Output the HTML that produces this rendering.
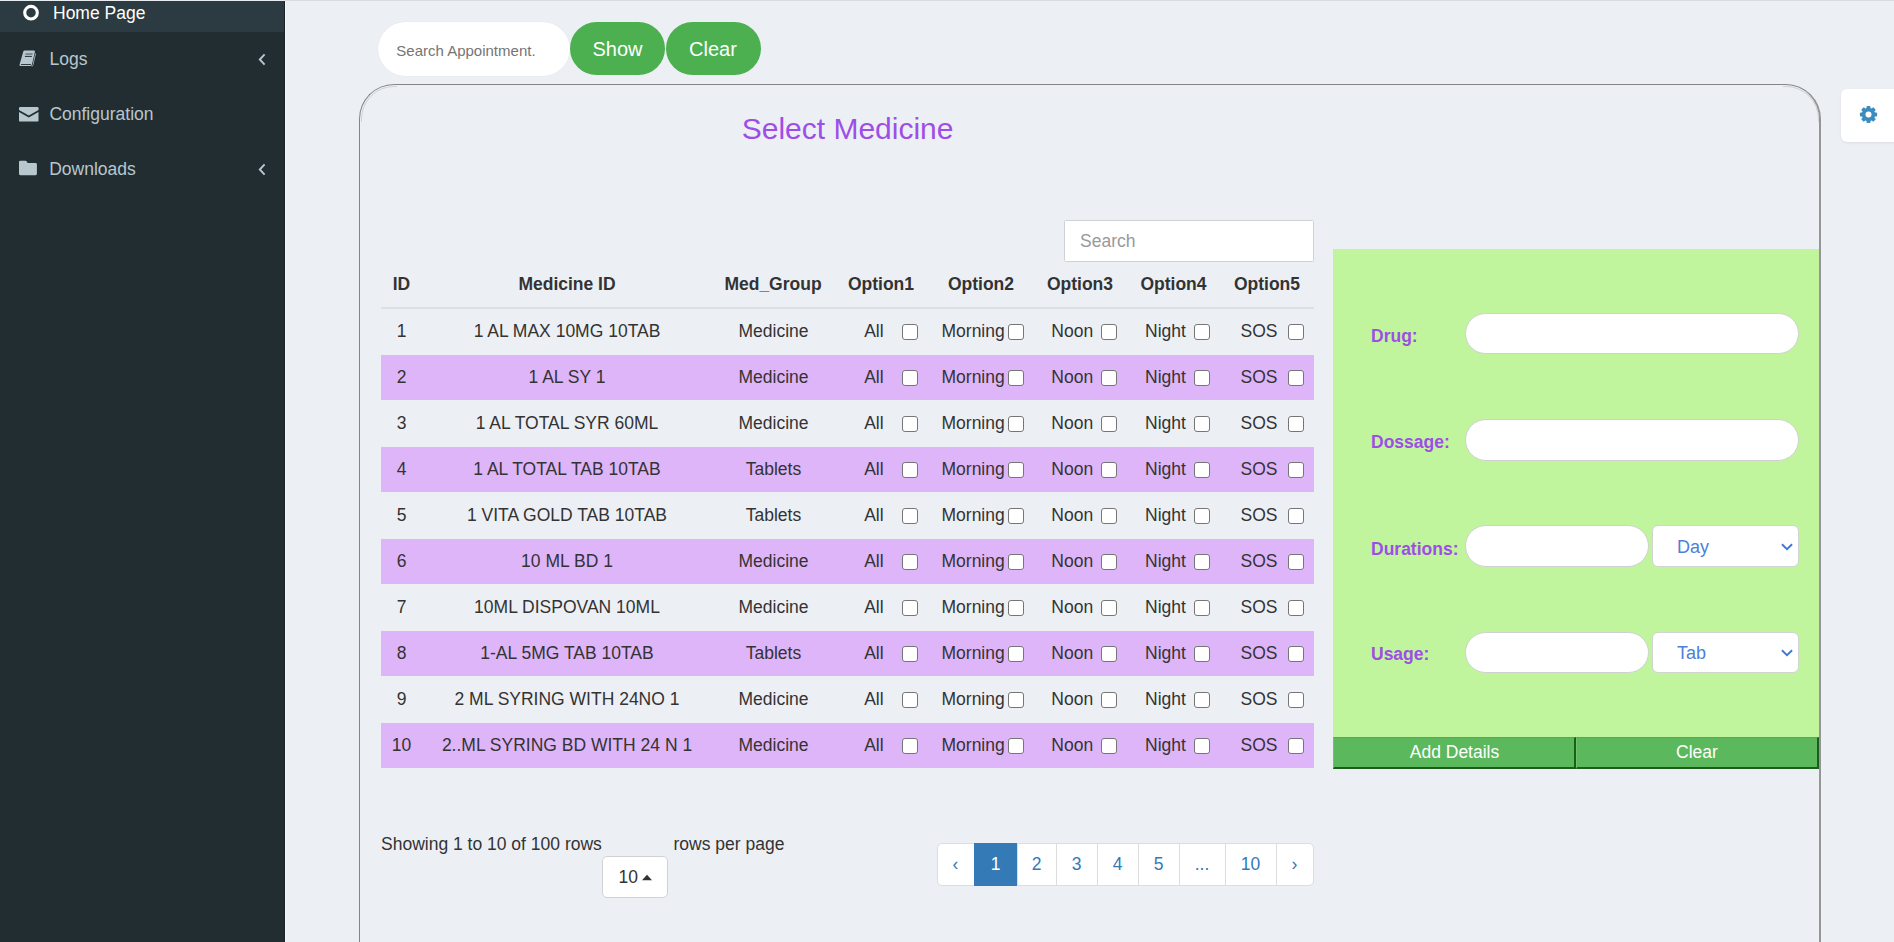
<!DOCTYPE html><html><head><meta charset="utf-8"><title>Select Medicine</title><style>*{margin:0;padding:0;box-sizing:border-box}
html,body{width:1894px;height:942px;overflow:hidden;background:#ecf0f5;font-family:"Liberation Sans",sans-serif;color:#333;position:relative}
.t{position:absolute;white-space:nowrap}
.a{position:absolute;display:block}
.box{position:absolute}
.sidebar{position:absolute;left:0;top:0;width:285px;height:942px;background:#222d32}
.active{position:absolute;left:0;top:1px;width:284px;height:31px;background:#2c3b41}
.sbedge{position:absolute;left:284px;top:0;width:1px;height:942px;background:#1a2226}
.sbedge2{position:absolute;left:285px;top:0;width:1px;height:942px;background:#f7f9fb}
.topline1{position:absolute;left:0;top:0;width:285px;height:1px;background:#e6ecef}
.topline2{position:absolute;left:285px;top:0;width:1609px;height:1px;background:#d8dbe0}
.sappt{background:#fff;border-radius:27px;box-shadow:0 0 1px rgba(0,0,0,.12)}
.gbtn{background:#4caf50;border-radius:27px}
.gearbox{left:1841px;top:89px;width:80px;height:53px;background:#fff;border-radius:6px;box-shadow:0 1px 3px rgba(0,0,0,.08)}
.cont{position:absolute;left:359px;top:84px;width:1462px;height:1000px;border:1.25px solid #858585;border-right:2px solid #959595;border-radius:35px}
.corner{position:absolute;width:36px;height:36px;overflow:hidden}
.corner div{position:absolute;width:200px;height:200px;border:1px solid #cfd1d5;border-radius:33px}
.tsearch{left:1064px;top:220px;width:250px;height:42px;background:#fff;border:1.25px solid #cfd2d6;border-radius:1.5px}
.prow{left:381px;width:933px;height:46px;background:#dfb5fa}
.cb{width:16px;height:16px;background:#fff;border:1.25px solid #767676;border-radius:3px}
.gpanel{left:1333px;top:249px;width:486px;height:488px;background:#c1f59d}
.rin{background:#fff;border:1.25px solid #d0d0d0;border-radius:21px}
.rsel{background:#fff;border:1.25px solid #d2d4d0;border-radius:6px}
.rbtn{background:#5cb85c;border-top:1px solid #4cae4c;border-left:1px solid #6cc46c;border-right:2px solid #1b5e1b;border-bottom:2px solid #1b5e1b}
.psel{left:602px;top:856px;width:66px;height:42px;background:#fff;border:1.25px solid #d2d2d2;border-radius:5px}
.pag{left:937px;top:843px;width:376.5px;height:43px;background:#fff;border:1.25px solid #ddd;border-radius:5px}
</style></head><body>
<div class="sidebar"><div class="active"></div></div><div class="sbedge"></div><div class="sbedge2"></div>
<div class="topline1"></div><div class="topline2"></div>
<svg class="a" style="left:22px;top:4px" width="18" height="18" viewBox="0 0 18 18"><circle cx="9" cy="8.7" r="6.3" fill="none" stroke="#fff" stroke-width="3.1"/></svg>
<div class="t" style="top:2px;font-size:17.5px;line-height:23px;color:#fff;left:53.00px;">Home Page</div>
<svg class="a" style="left:19px;top:50px" width="20" height="18" viewBox="0 0 20 18"><path d="M5.6 0.6 H15 Q16.2 0.6 15.9 1.8 L12.9 14.8 Q12.6 16.1 11.3 16.1 H1.6 Q0.2 16.1 0.6 14.6 L4.2 1.8 Q4.5 0.6 5.6 0.6 Z" fill="#b8c7ce"/><path d="M16.2 3.4 L17 3.6 L14.2 15.6 Q13.9 16.6 12.8 16.6 L12.6 16.1 Q13.4 16 13.6 15.2 Z" fill="#b8c7ce"/><path d="M6.4 4 H13.6" stroke="#5c6a70" stroke-width="1.3"/><path d="M5.9 6.4 H12.9" stroke="#222d32" stroke-width="1"/><path d="M2 14.5 H12" stroke="#222d32" stroke-width="0.9"/></svg>
<div class="t" style="top:48px;font-size:17.5px;line-height:23px;color:#b8c7ce;left:49.50px;">Logs</div>
<svg class="a" style="left:256px;top:53px" width="12" height="13" viewBox="0 0 12 13"><path d="M8.6 1.4 L3.8 6.5 L8.6 11.6" fill="none" stroke="#b8c7ce" stroke-width="1.9"/></svg>
<svg class="a" style="left:19px;top:107px" width="20" height="15" viewBox="0 0 20 15"><path d="M1.2 0 H18.3 Q19.5 0 19.5 1.2 V3 L9.8 8.6 L0 3 V1.2 Q0 0 1.2 0 Z" fill="#b8c7ce"/><path d="M0 5.1 L9.8 10.6 L19.5 5.1 V13.4 Q19.5 14.6 18.3 14.6 H1.2 Q0 14.6 0 13.4 Z" fill="#b8c7ce"/></svg>
<div class="t" style="top:103px;font-size:17.5px;line-height:23px;color:#b8c7ce;left:49.40px;">Configuration</div>
<svg class="a" style="left:19px;top:160px" width="19" height="16" viewBox="0 0 19 16"><path d="M1.3 0.8 H6.4 Q7.3 0.8 7.8 1.6 L8.6 2.9 H16.6 Q17.9 2.9 17.9 4.2 V13.8 Q17.9 15.2 16.6 15.2 H1.3 Q0 15.2 0 13.8 V2.1 Q0 0.8 1.3 0.8 Z" fill="#b8c7ce"/></svg>
<div class="t" style="top:158px;font-size:17.5px;line-height:23px;color:#b8c7ce;left:49.20px;">Downloads</div>
<svg class="a" style="left:256px;top:163px" width="12" height="13" viewBox="0 0 12 13"><path d="M8.6 1.4 L3.8 6.5 L8.6 11.6" fill="none" stroke="#b8c7ce" stroke-width="1.9"/></svg>
<div class="box sappt" style="left:378px;top:22px;width:192px;height:54px"></div>
<div class="t" style="top:41px;font-size:15px;line-height:20px;color:#757575;left:396.30px;">Search Appointment.</div>
<div class="box gbtn" style="left:570px;top:22px;width:95px;height:53px"></div>
<div class="box gbtn" style="left:665.5px;top:22px;width:95.5px;height:53px"></div>
<div class="t" style="top:36px;font-size:20px;line-height:26px;color:#fff;left:317.50px;width:600px;text-align:center;">Show</div>
<div class="t" style="top:36px;font-size:20px;line-height:26px;color:#fff;left:413.00px;width:600px;text-align:center;">Clear</div>
<div class="box gearbox"></div>
<svg class="a" style="left:1859px;top:105px" width="19" height="19" viewBox="0 0 19 19"><g fill="#3c8dbc"><circle cx="9.5" cy="9.5" r="6.7"/><g id="tooth"><rect x="7.55" y="0.9" width="3.9" height="4.5" rx="0.9"/></g><use href="#tooth" transform="rotate(45 9.5 9.5)"/><use href="#tooth" transform="rotate(90 9.5 9.5)"/><use href="#tooth" transform="rotate(135 9.5 9.5)"/><use href="#tooth" transform="rotate(180 9.5 9.5)"/><use href="#tooth" transform="rotate(225 9.5 9.5)"/><use href="#tooth" transform="rotate(270 9.5 9.5)"/><use href="#tooth" transform="rotate(315 9.5 9.5)"/></g><circle cx="9.5" cy="9.5" r="3" fill="#fff"/></svg>
<div class="cont"></div><div class="corner" style="left:361px;top:86px"><div style="left:0;top:0"></div></div><div class="corner" style="left:1783px;top:86px"><div style="right:0;top:0"></div></div>
<div class="t" style="top:109px;font-size:30px;line-height:39px;color:#9e4ee6;left:741.70px;">Select Medicine</div>
<div class="box tsearch"></div>
<div class="t" style="top:230px;font-size:17.5px;line-height:23px;color:#999;left:1080.00px;">Search</div>
<div class="t" style="top:273px;font-size:17.5px;line-height:23px;color:#333;font-weight:bold;left:101.50px;width:600px;text-align:center;">ID</div>
<div class="t" style="top:273px;font-size:17.5px;line-height:23px;color:#333;font-weight:bold;left:267.00px;width:600px;text-align:center;">Medicine ID</div>
<div class="t" style="top:273px;font-size:17.5px;line-height:23px;color:#333;font-weight:bold;left:473.00px;width:600px;text-align:center;">Med_Group</div>
<div class="t" style="top:273px;font-size:17.5px;line-height:23px;color:#333;font-weight:bold;left:581.00px;width:600px;text-align:center;">Option1</div>
<div class="t" style="top:273px;font-size:17.5px;line-height:23px;color:#333;font-weight:bold;left:681.00px;width:600px;text-align:center;">Option2</div>
<div class="t" style="top:273px;font-size:17.5px;line-height:23px;color:#333;font-weight:bold;left:780.00px;width:600px;text-align:center;">Option3</div>
<div class="t" style="top:273px;font-size:17.5px;line-height:23px;color:#333;font-weight:bold;left:873.50px;width:600px;text-align:center;">Option4</div>
<div class="t" style="top:273px;font-size:17.5px;line-height:23px;color:#333;font-weight:bold;left:967.00px;width:600px;text-align:center;">Option5</div>
<div class="box" style="left:381px;top:307px;width:933px;height:2px;background:#dcdfe3"></div>
<div class="t" style="top:320px;font-size:17.5px;line-height:23px;color:#333;left:101.50px;width:600px;text-align:center;">1</div>
<div class="t" style="top:320px;font-size:17.5px;line-height:23px;color:#333;left:267.00px;width:600px;text-align:center;">1 AL MAX 10MG 10TAB</div>
<div class="t" style="top:320px;font-size:17.5px;line-height:23px;color:#333;left:473.50px;width:600px;text-align:center;">Medicine</div>
<div class="t" style="top:320px;font-size:17.5px;line-height:23px;color:#333;left:864.20px;">All</div>
<div class="box cb" style="left:902px;top:324.3px"></div>
<div class="t" style="top:320px;font-size:17.5px;line-height:23px;color:#333;left:941.50px;">Morning</div>
<div class="box cb" style="left:1008px;top:324.3px"></div>
<div class="t" style="top:320px;font-size:17.5px;line-height:23px;color:#333;left:1051.30px;">Noon</div>
<div class="box cb" style="left:1101px;top:324.3px"></div>
<div class="t" style="top:320px;font-size:17.5px;line-height:23px;color:#333;left:1145.00px;">Night</div>
<div class="box cb" style="left:1194px;top:324.3px"></div>
<div class="t" style="top:320px;font-size:17.5px;line-height:23px;color:#333;left:1240.50px;">SOS</div>
<div class="box cb" style="left:1288px;top:324.3px"></div>
<div class="box prow" style="top:355px;height:45px"></div>
<div class="t" style="top:366px;font-size:17.5px;line-height:23px;color:#333;left:101.50px;width:600px;text-align:center;">2</div>
<div class="t" style="top:366px;font-size:17.5px;line-height:23px;color:#333;left:267.00px;width:600px;text-align:center;">1 AL SY 1</div>
<div class="t" style="top:366px;font-size:17.5px;line-height:23px;color:#333;left:473.50px;width:600px;text-align:center;">Medicine</div>
<div class="t" style="top:366px;font-size:17.5px;line-height:23px;color:#333;left:864.20px;">All</div>
<div class="box cb" style="left:902px;top:370.3px"></div>
<div class="t" style="top:366px;font-size:17.5px;line-height:23px;color:#333;left:941.50px;">Morning</div>
<div class="box cb" style="left:1008px;top:370.3px"></div>
<div class="t" style="top:366px;font-size:17.5px;line-height:23px;color:#333;left:1051.30px;">Noon</div>
<div class="box cb" style="left:1101px;top:370.3px"></div>
<div class="t" style="top:366px;font-size:17.5px;line-height:23px;color:#333;left:1145.00px;">Night</div>
<div class="box cb" style="left:1194px;top:370.3px"></div>
<div class="t" style="top:366px;font-size:17.5px;line-height:23px;color:#333;left:1240.50px;">SOS</div>
<div class="box cb" style="left:1288px;top:370.3px"></div>
<div class="t" style="top:412px;font-size:17.5px;line-height:23px;color:#333;left:101.50px;width:600px;text-align:center;">3</div>
<div class="t" style="top:412px;font-size:17.5px;line-height:23px;color:#333;left:267.00px;width:600px;text-align:center;">1 AL TOTAL SYR 60ML</div>
<div class="t" style="top:412px;font-size:17.5px;line-height:23px;color:#333;left:473.50px;width:600px;text-align:center;">Medicine</div>
<div class="t" style="top:412px;font-size:17.5px;line-height:23px;color:#333;left:864.20px;">All</div>
<div class="box cb" style="left:902px;top:416.3px"></div>
<div class="t" style="top:412px;font-size:17.5px;line-height:23px;color:#333;left:941.50px;">Morning</div>
<div class="box cb" style="left:1008px;top:416.3px"></div>
<div class="t" style="top:412px;font-size:17.5px;line-height:23px;color:#333;left:1051.30px;">Noon</div>
<div class="box cb" style="left:1101px;top:416.3px"></div>
<div class="t" style="top:412px;font-size:17.5px;line-height:23px;color:#333;left:1145.00px;">Night</div>
<div class="box cb" style="left:1194px;top:416.3px"></div>
<div class="t" style="top:412px;font-size:17.5px;line-height:23px;color:#333;left:1240.50px;">SOS</div>
<div class="box cb" style="left:1288px;top:416.3px"></div>
<div class="box prow" style="top:447px;height:45px"></div>
<div class="t" style="top:458px;font-size:17.5px;line-height:23px;color:#333;left:101.50px;width:600px;text-align:center;">4</div>
<div class="t" style="top:458px;font-size:17.5px;line-height:23px;color:#333;left:267.00px;width:600px;text-align:center;">1 AL TOTAL TAB 10TAB</div>
<div class="t" style="top:458px;font-size:17.5px;line-height:23px;color:#333;left:473.50px;width:600px;text-align:center;">Tablets</div>
<div class="t" style="top:458px;font-size:17.5px;line-height:23px;color:#333;left:864.20px;">All</div>
<div class="box cb" style="left:902px;top:462.3px"></div>
<div class="t" style="top:458px;font-size:17.5px;line-height:23px;color:#333;left:941.50px;">Morning</div>
<div class="box cb" style="left:1008px;top:462.3px"></div>
<div class="t" style="top:458px;font-size:17.5px;line-height:23px;color:#333;left:1051.30px;">Noon</div>
<div class="box cb" style="left:1101px;top:462.3px"></div>
<div class="t" style="top:458px;font-size:17.5px;line-height:23px;color:#333;left:1145.00px;">Night</div>
<div class="box cb" style="left:1194px;top:462.3px"></div>
<div class="t" style="top:458px;font-size:17.5px;line-height:23px;color:#333;left:1240.50px;">SOS</div>
<div class="box cb" style="left:1288px;top:462.3px"></div>
<div class="t" style="top:504px;font-size:17.5px;line-height:23px;color:#333;left:101.50px;width:600px;text-align:center;">5</div>
<div class="t" style="top:504px;font-size:17.5px;line-height:23px;color:#333;left:267.00px;width:600px;text-align:center;">1 VITA GOLD TAB 10TAB</div>
<div class="t" style="top:504px;font-size:17.5px;line-height:23px;color:#333;left:473.50px;width:600px;text-align:center;">Tablets</div>
<div class="t" style="top:504px;font-size:17.5px;line-height:23px;color:#333;left:864.20px;">All</div>
<div class="box cb" style="left:902px;top:508.3px"></div>
<div class="t" style="top:504px;font-size:17.5px;line-height:23px;color:#333;left:941.50px;">Morning</div>
<div class="box cb" style="left:1008px;top:508.3px"></div>
<div class="t" style="top:504px;font-size:17.5px;line-height:23px;color:#333;left:1051.30px;">Noon</div>
<div class="box cb" style="left:1101px;top:508.3px"></div>
<div class="t" style="top:504px;font-size:17.5px;line-height:23px;color:#333;left:1145.00px;">Night</div>
<div class="box cb" style="left:1194px;top:508.3px"></div>
<div class="t" style="top:504px;font-size:17.5px;line-height:23px;color:#333;left:1240.50px;">SOS</div>
<div class="box cb" style="left:1288px;top:508.3px"></div>
<div class="box prow" style="top:539px;height:45px"></div>
<div class="t" style="top:550px;font-size:17.5px;line-height:23px;color:#333;left:101.50px;width:600px;text-align:center;">6</div>
<div class="t" style="top:550px;font-size:17.5px;line-height:23px;color:#333;left:267.00px;width:600px;text-align:center;">10 ML BD 1</div>
<div class="t" style="top:550px;font-size:17.5px;line-height:23px;color:#333;left:473.50px;width:600px;text-align:center;">Medicine</div>
<div class="t" style="top:550px;font-size:17.5px;line-height:23px;color:#333;left:864.20px;">All</div>
<div class="box cb" style="left:902px;top:554.3px"></div>
<div class="t" style="top:550px;font-size:17.5px;line-height:23px;color:#333;left:941.50px;">Morning</div>
<div class="box cb" style="left:1008px;top:554.3px"></div>
<div class="t" style="top:550px;font-size:17.5px;line-height:23px;color:#333;left:1051.30px;">Noon</div>
<div class="box cb" style="left:1101px;top:554.3px"></div>
<div class="t" style="top:550px;font-size:17.5px;line-height:23px;color:#333;left:1145.00px;">Night</div>
<div class="box cb" style="left:1194px;top:554.3px"></div>
<div class="t" style="top:550px;font-size:17.5px;line-height:23px;color:#333;left:1240.50px;">SOS</div>
<div class="box cb" style="left:1288px;top:554.3px"></div>
<div class="t" style="top:596px;font-size:17.5px;line-height:23px;color:#333;left:101.50px;width:600px;text-align:center;">7</div>
<div class="t" style="top:596px;font-size:17.5px;line-height:23px;color:#333;left:267.00px;width:600px;text-align:center;">10ML DISPOVAN 10ML</div>
<div class="t" style="top:596px;font-size:17.5px;line-height:23px;color:#333;left:473.50px;width:600px;text-align:center;">Medicine</div>
<div class="t" style="top:596px;font-size:17.5px;line-height:23px;color:#333;left:864.20px;">All</div>
<div class="box cb" style="left:902px;top:600.3px"></div>
<div class="t" style="top:596px;font-size:17.5px;line-height:23px;color:#333;left:941.50px;">Morning</div>
<div class="box cb" style="left:1008px;top:600.3px"></div>
<div class="t" style="top:596px;font-size:17.5px;line-height:23px;color:#333;left:1051.30px;">Noon</div>
<div class="box cb" style="left:1101px;top:600.3px"></div>
<div class="t" style="top:596px;font-size:17.5px;line-height:23px;color:#333;left:1145.00px;">Night</div>
<div class="box cb" style="left:1194px;top:600.3px"></div>
<div class="t" style="top:596px;font-size:17.5px;line-height:23px;color:#333;left:1240.50px;">SOS</div>
<div class="box cb" style="left:1288px;top:600.3px"></div>
<div class="box prow" style="top:631px;height:45px"></div>
<div class="t" style="top:642px;font-size:17.5px;line-height:23px;color:#333;left:101.50px;width:600px;text-align:center;">8</div>
<div class="t" style="top:642px;font-size:17.5px;line-height:23px;color:#333;left:267.00px;width:600px;text-align:center;">1-AL 5MG TAB 10TAB</div>
<div class="t" style="top:642px;font-size:17.5px;line-height:23px;color:#333;left:473.50px;width:600px;text-align:center;">Tablets</div>
<div class="t" style="top:642px;font-size:17.5px;line-height:23px;color:#333;left:864.20px;">All</div>
<div class="box cb" style="left:902px;top:646.3px"></div>
<div class="t" style="top:642px;font-size:17.5px;line-height:23px;color:#333;left:941.50px;">Morning</div>
<div class="box cb" style="left:1008px;top:646.3px"></div>
<div class="t" style="top:642px;font-size:17.5px;line-height:23px;color:#333;left:1051.30px;">Noon</div>
<div class="box cb" style="left:1101px;top:646.3px"></div>
<div class="t" style="top:642px;font-size:17.5px;line-height:23px;color:#333;left:1145.00px;">Night</div>
<div class="box cb" style="left:1194px;top:646.3px"></div>
<div class="t" style="top:642px;font-size:17.5px;line-height:23px;color:#333;left:1240.50px;">SOS</div>
<div class="box cb" style="left:1288px;top:646.3px"></div>
<div class="t" style="top:688px;font-size:17.5px;line-height:23px;color:#333;left:101.50px;width:600px;text-align:center;">9</div>
<div class="t" style="top:688px;font-size:17.5px;line-height:23px;color:#333;left:267.00px;width:600px;text-align:center;">2 ML SYRING WITH 24NO 1</div>
<div class="t" style="top:688px;font-size:17.5px;line-height:23px;color:#333;left:473.50px;width:600px;text-align:center;">Medicine</div>
<div class="t" style="top:688px;font-size:17.5px;line-height:23px;color:#333;left:864.20px;">All</div>
<div class="box cb" style="left:902px;top:692.3px"></div>
<div class="t" style="top:688px;font-size:17.5px;line-height:23px;color:#333;left:941.50px;">Morning</div>
<div class="box cb" style="left:1008px;top:692.3px"></div>
<div class="t" style="top:688px;font-size:17.5px;line-height:23px;color:#333;left:1051.30px;">Noon</div>
<div class="box cb" style="left:1101px;top:692.3px"></div>
<div class="t" style="top:688px;font-size:17.5px;line-height:23px;color:#333;left:1145.00px;">Night</div>
<div class="box cb" style="left:1194px;top:692.3px"></div>
<div class="t" style="top:688px;font-size:17.5px;line-height:23px;color:#333;left:1240.50px;">SOS</div>
<div class="box cb" style="left:1288px;top:692.3px"></div>
<div class="box prow" style="top:723px;height:45px"></div>
<div class="t" style="top:734px;font-size:17.5px;line-height:23px;color:#333;left:101.50px;width:600px;text-align:center;">10</div>
<div class="t" style="top:734px;font-size:17.5px;line-height:23px;color:#333;left:267.00px;width:600px;text-align:center;">2..ML SYRING BD WITH 24 N 1</div>
<div class="t" style="top:734px;font-size:17.5px;line-height:23px;color:#333;left:473.50px;width:600px;text-align:center;">Medicine</div>
<div class="t" style="top:734px;font-size:17.5px;line-height:23px;color:#333;left:864.20px;">All</div>
<div class="box cb" style="left:902px;top:738.3px"></div>
<div class="t" style="top:734px;font-size:17.5px;line-height:23px;color:#333;left:941.50px;">Morning</div>
<div class="box cb" style="left:1008px;top:738.3px"></div>
<div class="t" style="top:734px;font-size:17.5px;line-height:23px;color:#333;left:1051.30px;">Noon</div>
<div class="box cb" style="left:1101px;top:738.3px"></div>
<div class="t" style="top:734px;font-size:17.5px;line-height:23px;color:#333;left:1145.00px;">Night</div>
<div class="box cb" style="left:1194px;top:738.3px"></div>
<div class="t" style="top:734px;font-size:17.5px;line-height:23px;color:#333;left:1240.50px;">SOS</div>
<div class="box cb" style="left:1288px;top:738.3px"></div>
<div class="box gpanel"></div>
<div class="t" style="top:325px;font-size:17.5px;line-height:23px;color:#9e4ee6;font-weight:bold;left:1371.00px;">Drug:</div>
<div class="t" style="top:431px;font-size:17.5px;line-height:23px;color:#9e4ee6;font-weight:bold;left:1371.00px;">Dossage:</div>
<div class="t" style="top:538px;font-size:17.5px;line-height:23px;color:#9e4ee6;font-weight:bold;left:1371.00px;">Durations:</div>
<div class="t" style="top:643px;font-size:17.5px;line-height:23px;color:#9e4ee6;font-weight:bold;left:1371.00px;">Usage:</div>
<div class="box rin" style="left:1465px;top:313px;width:334px;height:41px"></div>
<div class="box rin" style="left:1465px;top:419px;width:334px;height:41.5px"></div>
<div class="box rin" style="left:1465px;top:525px;width:183.5px;height:42px"></div>
<div class="box rin" style="left:1465px;top:632px;width:183.5px;height:41px"></div>
<div class="box rsel" style="left:1651.5px;top:525px;width:147px;height:41.5px"></div>
<div class="box rsel" style="left:1651.5px;top:632px;width:147px;height:40.5px"></div>
<div class="t" style="top:536px;font-size:18px;line-height:23px;color:#4d80d8;left:1677.00px;">Day</div>
<div class="t" style="top:642px;font-size:18px;line-height:23px;color:#4d80d8;left:1677.00px;">Tab</div>
<svg class="a" style="left:1780px;top:541.5px" width="14" height="10" viewBox="0 0 14 10"><path d="M1.9 2.3 L7 7.2 L12.1 2.3" fill="none" stroke="#4178d2" stroke-width="1.9"/></svg>
<svg class="a" style="left:1780px;top:647.5px" width="14" height="10" viewBox="0 0 14 10"><path d="M1.9 2.3 L7 7.2 L12.1 2.3" fill="none" stroke="#4178d2" stroke-width="1.9"/></svg>
<div class="box rbtn" style="left:1333px;top:737px;width:243px;height:31.5px"></div>
<div class="box rbtn" style="left:1576px;top:737px;width:243px;height:31.5px"></div>
<div class="t" style="top:741px;font-size:17.5px;line-height:23px;color:#fff;left:1154.50px;width:600px;text-align:center;">Add Details</div>
<div class="t" style="top:741px;font-size:17.5px;line-height:23px;color:#fff;left:1397.00px;width:600px;text-align:center;">Clear</div>
<div class="t" style="top:833px;font-size:17.5px;line-height:23px;color:#333;left:381.00px;">Showing 1 to 10 of 100 rows</div>
<div class="t" style="top:833px;font-size:17.5px;line-height:23px;color:#333;left:673.50px;">rows per page</div>
<div class="box psel"></div>
<div class="t" style="top:866px;font-size:17.5px;line-height:23px;color:#333;left:618.50px;">10</div>
<svg class="a" style="left:641px;top:873px" width="12" height="8" viewBox="0 0 12 8"><path d="M1 7.3 L6 1.8 L11 7.3 Z" fill="#333"/></svg>
<div class="box pag"></div>
<div class="t" style="top:853px;font-size:17.5px;line-height:23px;color:#337ab7;left:655.50px;width:600px;text-align:center;">‹</div>
<div class="box" style="left:974px;top:843px;width:43px;height:43px;background:#337ab7"></div>
<div class="t" style="top:853px;font-size:17.5px;line-height:23px;color:#fff;left:695.50px;width:600px;text-align:center;">1</div>
<div class="box" style="left:1017px;top:844px;width:1px;height:41px;background:#ddd"></div>
<div class="t" style="top:853px;font-size:17.5px;line-height:23px;color:#337ab7;left:736.50px;width:600px;text-align:center;">2</div>
<div class="box" style="left:1056px;top:844px;width:1px;height:41px;background:#ddd"></div>
<div class="t" style="top:853px;font-size:17.5px;line-height:23px;color:#337ab7;left:776.50px;width:600px;text-align:center;">3</div>
<div class="box" style="left:1097px;top:844px;width:1px;height:41px;background:#ddd"></div>
<div class="t" style="top:853px;font-size:17.5px;line-height:23px;color:#337ab7;left:817.50px;width:600px;text-align:center;">4</div>
<div class="box" style="left:1138px;top:844px;width:1px;height:41px;background:#ddd"></div>
<div class="t" style="top:853px;font-size:17.5px;line-height:23px;color:#337ab7;left:858.50px;width:600px;text-align:center;">5</div>
<div class="box" style="left:1179px;top:844px;width:1px;height:41px;background:#ddd"></div>
<div class="t" style="top:853px;font-size:17.5px;line-height:23px;color:#337ab7;left:902.00px;width:600px;text-align:center;">...</div>
<div class="box" style="left:1225px;top:844px;width:1px;height:41px;background:#ddd"></div>
<div class="t" style="top:853px;font-size:17.5px;line-height:23px;color:#337ab7;left:950.50px;width:600px;text-align:center;">10</div>
<div class="box" style="left:1276px;top:844px;width:1px;height:41px;background:#ddd"></div>
<div class="t" style="top:853px;font-size:17.5px;line-height:23px;color:#337ab7;left:994.50px;width:600px;text-align:center;">›</div>
</body></html>
